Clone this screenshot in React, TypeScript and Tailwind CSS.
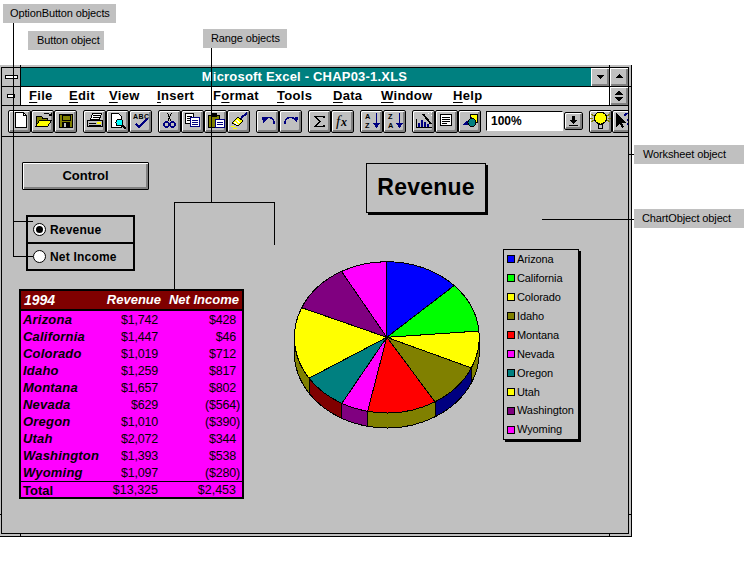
import React from "react";

const NAVY = "#000080";
const OLIVE = "#808000";

const Ico = ({ children }: { children: React.ReactNode }) => (
  <svg width="21" height="21" viewBox="0 0 21 21" shapeRendering="crispEdges" className="block">
    {children}
  </svg>
);

const icons: Record<string, React.ReactNode> = {
  newDoc: <Ico><path d="M6.5 1.5H14.5L17.5 4.5V16.5H6.5Z" fill="#fff" stroke="#000" /><path d="M14.5 1.5V4.5H17.5" fill="none" stroke="#000" /></Ico>,
  open: (
    <Ico>
      <path d="M4.5 15.5V5.5H9.5L11 7.5H15.5V9.5" fill="#808000" stroke="#000" />
      <path d="M3.5 15.5L7.5 9.5H19.5L15.5 15.5Z" fill="#ffff00" stroke="#000" />
      <path d="M11.5 3.5C13 1.5 16 1.5 18 4" fill="none" stroke="#000" />
      <path d="M16 5H20V2Z" fill="#000" />
    </Ico>
  ),
  save: (
    <Ico>
      <rect x="4.5" y="3.5" width="13" height="13" fill={OLIVE} stroke="#000" />
      <rect x="7" y="4" width="8" height="5" fill="#808000" stroke="#000" strokeWidth="1" />
      <rect x="7" y="11" width="8" height="6" fill="#000" />
      <rect x="9" y="12" width="2" height="4" fill="#c0c0c0" />
    </Ico>
  ),
  print: (
    <Ico>
      <path d="M6.5 8.5L8.5 2.5H17.5L15.5 8.5Z" fill="#fff" stroke="#000" />
      <path d="M9 4.5H16M8.5 6.5H15.5" stroke="#000" />
      <path d="M3.5 9.5H18.5V15.5H3.5Z" fill="#c0c0c0" stroke="#000" />
      <path d="M5 12.5H12M5 14.5H17" stroke="#000" />
      <rect x="13" y="11" width="4" height="2" fill="#ffff00" />
    </Ico>
  ),
  preview: (
    <Ico>
      <path d="M4.5 2.5H11.5L14.5 5.5V16.5H4.5Z" fill="#fff" stroke="#000" />
      <circle cx="12.5" cy="11.5" r="3.5" fill="#00ffff" stroke="#000" />
      <path d="M15 14L19 18" stroke="#000" strokeWidth="2" />
    </Ico>
  ),
  spell: (
    <Ico>
      <text x="3" y="7.5" fontSize="7" fontWeight="700" fontFamily="Liberation Sans" fill="#000" letterSpacing="0.4">ABC</text>
      <path d="M6 13L9 16L17 8" fill="none" stroke={NAVY} strokeWidth="2" />
    </Ico>
  ),
  cut: (
    <Ico>
      <path d="M8.5 11L12.5 2M12.5 11L8.5 2" stroke="#000" />
      <circle cx="7.5" cy="13.5" r="2.5" fill="none" stroke={NAVY} strokeWidth="1.4" />
      <circle cx="13.5" cy="13.5" r="2.5" fill="none" stroke={NAVY} strokeWidth="1.4" />
    </Ico>
  ),
  copy: (
    <Ico>
      <path d="M3.5 2.5H11.5V12.5H3.5Z" fill="#fff" stroke="#000" />
      <path d="M5 5.5H10M5 7.5H10M5 9.5H8" stroke="#000" />
      <path d="M8.5 6.5H17.5V15.5H8.5Z" fill="#fff" stroke={NAVY} />
      <path d="M10 9.5H16M10 11.5H16M10 13.5H16" stroke={NAVY} />
    </Ico>
  ),
  paste: (
    <Ico>
      <path d="M3.5 4.5H14.5V16.5H3.5Z" fill={OLIVE} stroke="#000" />
      <rect x="6" y="2" width="6" height="4" fill="#000" />
      <path d="M10.5 8.5H19.5V16.5H10.5Z" fill="#fff" stroke={NAVY} />
      <path d="M12 11.5H18M12 13.5H18" stroke={NAVY} />
    </Ico>
  ),
  brush: (
    <Ico>
      <path d="M19 2L13 7" stroke={NAVY} strokeWidth="2" />
      <path d="M10 6L15 10L10 15L4 12Z" fill="#ffff00" stroke="#000" />
      <path d="M8 9L12 12M6 11L10 14" stroke="#fff" />
      <path d="M3 15H7M5 17H9" stroke="#ffff00" />
    </Ico>
  ),
  undo: (
    <Ico>
      <path d="M8 7.5C12 5.5 17 6.5 17 12.5" fill="none" stroke={NAVY} strokeWidth="1.6" />
      <path d="M5 6L11 7L6 12Z" fill={NAVY} />
    </Ico>
  ),
  redo: (
    <Ico>
      <path d="M14 7.5C10 5.5 5 6.5 5 12.5" fill="none" stroke={NAVY} strokeWidth="1.6" />
      <path d="M18 6L12 7L17 12Z" fill={NAVY} />
    </Ico>
  ),
  sum: <Ico><path d="M15 7V5.5H6.5L11 10.5L6.5 15.5H15V14" fill="none" stroke="#000" strokeWidth="1.6" /></Ico>,
  fx: (
    <Ico>
      <text x="4" y="15" fontSize="15" fontStyle="italic" fontFamily="Liberation Serif" fill="#000">f</text>
      <text x="9" y="15" fontSize="12" fontStyle="italic" fontWeight="700" fontFamily="Liberation Serif" fill="#000">x</text>
    </Ico>
  ),
  az: (
    <Ico>
      <text x="4" y="8" fontSize="7.4" fontWeight="700" fontFamily="Liberation Sans" fill="#000">A</text>
      <text x="4" y="16.5" fontSize="7.4" fontWeight="700" fontFamily="Liberation Sans" fill="#000">Z</text>
      <path d="M15.5 2V15" stroke={NAVY} strokeWidth="1.5" />
      <path d="M12 12H19L15.5 17Z" fill={NAVY} />
    </Ico>
  ),
  za: (
    <Ico>
      <text x="4" y="8" fontSize="7.4" fontWeight="700" fontFamily="Liberation Sans" fill="#000">Z</text>
      <text x="4" y="16.5" fontSize="7.4" fontWeight="700" fontFamily="Liberation Sans" fill="#000">A</text>
      <path d="M15.5 2V15" stroke={NAVY} strokeWidth="1.5" />
      <path d="M12 12H19L15.5 17Z" fill={NAVY} />
    </Ico>
  ),
  chart: (
    <Ico>
      <path d="M3.5 8V16.5H19" fill="none" stroke="#000" />
      <rect x="5" y="12" width="2" height="4" fill={NAVY} />
      <rect x="8" y="9" width="2" height="7" fill={NAVY} />
      <rect x="11" y="11" width="2" height="5" fill={NAVY} />
      <rect x="14" y="13" width="2" height="3" fill={NAVY} />
      <path d="M10 3L18 13" stroke="#000" strokeWidth="2" />
      <path d="M15 2H16M18 4H19M18 1H19" stroke="#fff" />
    </Ico>
  ),
  textBox: (
    <Ico>
      <rect x="4.5" y="3.5" width="11" height="11" fill="#fff" stroke="#000" />
      <path d="M6 6.5H14M6 8.5H14M6 10.5H14M6 12.5H11" stroke="#000" />
    </Ico>
  ),
  draw: (
    <Ico>
      <rect x="11.5" y="3.5" width="7" height="8" fill="#ffff00" stroke="#000" />
      <path d="M3 14L13 6V14Z" fill={NAVY} />
      <circle cx="13" cy="11.5" r="4" fill="#008080" stroke="#000" />
    </Ico>
  ),
  bulb: (
    <Ico>
      <path d="M1 3L4 5M20 3L17 5M1 11L4 9M20 11L17 9M0 7H3M18 7H21" stroke="#808000" />
      <circle cx="10.5" cy="7" r="6" fill="#ffff00" stroke="#000" />
      <path d="M8.5 13.5H12.5V17.5H8.5Z" fill="#c0c0c0" stroke="#000" />
    </Ico>
  ),
  help: (
    <Ico>
      <path d="M3 2V16L6.5 12.5L9 17L11 16L9 12H13Z" fill="#000" />
      <path d="M12 5C12 1.5 17.5 1.5 17.5 5C17.5 7 14.5 7 14.5 10M14.5 11.5V13.5" fill="none" stroke={NAVY} strokeWidth="1.6" />
    </Ico>
  ),
};

const raised =
  "bg-[#c0c0c0] border border-black rounded-[2px] shadow-[inset_1px_1px_0_#ffffff,inset_-2px_-2px_0_#808080]";

const Tool = ({ name }: { name: string }) => (
  <div className={`w-[23px] h-[23px] shrink-0 ${raised}`}>{icons[name]}</div>
);

const ToolGroup = ({ names }: { names: string[] }) => (
  <div className="flex shrink-0">
    {names.map((n) => (
      <Tool key={n} name={n} />
    ))}
  </div>
);

const WinButton = ({ d }: { d: string }) => (
  <div className="w-[18px] h-full bg-[#c0c0c0] shadow-[inset_1px_1px_0_#ffffff,inset_-2px_-2px_0_#808080]">
    <svg width="18" height="18" viewBox="0 0 18 18" shapeRendering="crispEdges" className="block">
      <path d={d} fill="#000" />
    </svg>
  </div>
);

const Callout = ({ text, cls }: { text: string; cls: string }) => (
  <div className={`absolute h-[19px] bg-[#c0c0c0] text-[11px] leading-[18px] tracking-[-0.12px] text-black whitespace-nowrap ${cls}`}>{text}</div>
);

const Line = ({ cls }: { cls: string }) => <div className={`absolute bg-black ${cls}`} />;

const CX = 386.8;
const CY = 337.3;
const RX = 92.5;
const RY = 75.6;
const DEPTH = 15;

const onEllipse = ([x, y]: number[]): number[] => {
  const a = Math.atan2((y - CY) / RY, (x - CX) / RX);
  return [CX + RX * Math.cos(a), CY + RY * Math.sin(a)];
};

const edge = [
  [386.8, 261.7],
  [454, 285.7],
  [479.3, 331],
  [470.7, 367.7],
  [435, 401.7],
  [367.7, 411],
  [342.3, 402.7],
  [310, 377.7],
  [301.7, 307.7],
  [341.7, 271.7],
].map(onEllipse);

const topColors = ["#0000ff", "#00ff00", "#ffff00", "#808000", "#ff0000", "#ff00ff", "#008080", "#ffff00", "#800080", "#ff00ff"];

const side = (a: number[], b: number[]) =>
  `M${a[0]} ${a[1]}A${RX} ${RY} 0 0 1 ${b[0]} ${b[1]}L${b[0]} ${b[1] + DEPTH}A${RX} ${RY} 0 0 0 ${a[0]} ${a[1] + DEPTH}Z`;

const PieChart = () => {
  const rightMost = [CX + RX, CY];
  const leftMost = [CX - RX, CY];
  const sides: [number[], number[], string][] = [
    [rightMost, edge[3], OLIVE],
    [edge[3], edge[4], NAVY],
    [edge[4], edge[5], OLIVE],
    [edge[5], edge[6], "#800080"],
    [edge[6], edge[7], "#800000"],
    [edge[7], leftMost, OLIVE],
  ];
  return (
    <svg width="195" height="175" viewBox="290 258 195 175" shapeRendering="crispEdges" className="block">
      {sides.map(([a, b, c], i) => (
        <path key={i} d={side(a, b)} fill={c} stroke="#000" />
      ))}
      {edge.map((p, i) => {
        const q = edge[(i + 1) % edge.length];
        return (
          <path
            key={i}
            d={`M${CX} ${CY}L${p[0]} ${p[1]}A${RX} ${RY} 0 0 1 ${q[0]} ${q[1]}Z`}
            fill={topColors[i]}
            stroke="#000"
          />
        );
      })}
    </svg>
  );
};

const rows: [string, string, string][] = [
  ["Arizona", "$1,742", "$428"],
  ["California", "$1,447", "$46"],
  ["Colorado", "$1,019", "$712"],
  ["Idaho", "$1,259", "$817"],
  ["Montana", "$1,657", "$802"],
  ["Nevada", "$629", "($564)"],
  ["Oregon", "$1,010", "($390)"],
  ["Utah", "$2,072", "$344"],
  ["Washington", "$1,393", "$538"],
  ["Wyoming", "$1,097", "($280)"],
];

const legend: [string, string][] = [
  ["Arizona", "bg-[#0000ff]"],
  ["California", "bg-[#00ff00]"],
  ["Colorado", "bg-[#ffff00]"],
  ["Idaho", "bg-[#808000]"],
  ["Montana", "bg-[#ff0000]"],
  ["Nevada", "bg-[#ff00ff]"],
  ["Oregon", "bg-[#008080]"],
  ["Utah", "bg-[#ffff00]"],
  ["Washington", "bg-[#800080]"],
  ["Wyoming", "bg-[#ff00ff]"],
];

const menu: [string, string, string, string][] = [
  ["", "F", "ile", "w-[40px]"],
  ["", "E", "dit", "w-[40px]"],
  ["", "V", "iew", "w-[48px]"],
  ["", "I", "nsert", "w-[56px]"],
  ["F", "o", "rmat", "w-[64px]"],
  ["", "T", "ools", "w-[56px]"],
  ["", "D", "ata", "w-[48px]"],
  ["", "W", "indow", "w-[72px]"],
  ["", "H", "elp", "w-[40px]"],
];

const Radio = ({ checked, label }: { checked?: boolean; label: string }) => (
  <div className="flex items-center h-[25px] pl-[5px] gap-[4px]">
    <div className="w-[13px] h-[13px] rounded-full border border-black bg-white flex items-center justify-center">
      {checked && <div className="w-[7px] h-[7px] rounded-full bg-black" />}
    </div>
    <span className="text-[12px] font-bold tracking-[0.2px] text-black leading-none">{label}</span>
  </div>
);

export default function App() {
  return (
    <div className="relative w-[744px] h-[576px] bg-white overflow-hidden font-['Liberation_Sans',Arial,sans-serif]">
      <div className="absolute left-0 top-[65px] w-[632px] h-[472px] bg-[#c0c0c0] border-r border-b border-black pt-[2px] pl-[1px] pr-[2px] pb-[2px]">
        <div className="w-[628px] h-[467px] border border-black flex flex-col overflow-hidden">
          <div className="flex h-[19px] border-b border-black shrink-0">
            <div className="w-[19px] border-r border-black flex items-center justify-center">
              <div className="w-[13px] h-[4px] bg-white border border-black" />
            </div>
            <div className="flex-1 bg-[#008080] text-white text-[13px] font-bold leading-[18px] text-center pr-[3px] tracking-[0.2px]">
              Microsoft Excel - CHAP03-1.XLS
            </div>
            <WinButton d="M5 7H13L9 11Z" />
            <div className="w-px bg-black" />
            <WinButton d="M9 6L13 10H5Z" />
          </div>
          <div className="flex h-[19px] border-b border-black shrink-0">
            <div className="w-[19px] border-r border-black flex items-center justify-center">
              <div className="w-[8px] h-[4px] bg-white border border-black" />
            </div>
            <div className="flex-1 bg-white flex items-center pl-[8px] text-[13px] font-bold text-black tracking-[0.3px] border-r border-black">
              {menu.map(([pre, key, rest, width]) => (
                <span key={key + rest} className={`whitespace-nowrap shrink-0 ${width}`}>
                  {pre}
                  <span className="underline underline-offset-2">{key}</span>
                  {rest}
                </span>
              ))}
            </div>
            <WinButton d="M9 3L13 7.5H5ZM5 10H13L9 14.5Z" />
          </div>
          <div className="flex items-start h-[31px] border-b border-black shrink-0 pt-[4px] pl-[6px] gap-[6px] overflow-hidden">
            <ToolGroup names={["newDoc", "open", "save"]} />
            <ToolGroup names={["print", "preview", "spell"]} />
            <ToolGroup names={["cut", "copy", "paste", "brush"]} />
            <ToolGroup names={["undo", "redo"]} />
            <ToolGroup names={["sum", "fx"]} />
            <ToolGroup names={["az", "za"]} />
            <ToolGroup names={["chart", "textBox", "draw"]} />
            <div className="flex shrink-0 gap-px -ml-px">
              <div className="w-[77px] h-[20px] mt-px bg-white border border-black border-r-white border-b-white shadow-[1px_1px_0_#c0c0c0] pl-[4px] text-[12px] font-bold leading-[18px] text-black">
                100%
              </div>
              <div className={`w-[19px] h-[18px] mt-[2px] ${raised}`}>
                <svg width="17" height="16" viewBox="0 0 17 16" shapeRendering="crispEdges" className="block">
                  <path d="M7 3H10V7H12L8.5 11L5 7H7ZM4 12H13V13H4Z" fill="#000" />
                </svg>
              </div>
            </div>
            <ToolGroup names={["bulb", "help"]} />
          </div>

          <div className="relative flex-1 bg-[#c0c0c0]">
            <div className="absolute left-[20px] top-[25px] w-[127px] h-[28px] bg-[#c0c0c0] border border-black rounded-[1px] shadow-[inset_1px_1px_0_#ffffff,inset_-2px_-2px_0_#808080] flex items-center justify-center text-[13px] font-bold text-black">
              Control
            </div>

            <div className="absolute left-[24px] top-[78px] w-[109px] h-[56px] border-2 border-black flex flex-col">
              <Radio checked label="Revenue" />
              <div className="h-[2px] bg-black shrink-0" />
              <Radio label="Net Income" />
            </div>

            <div className="absolute left-[17px] top-[152px] w-[225px] h-[210px] border-2 border-black bg-[#ff00ff] text-black">
              <div className="grid grid-cols-[60px_80px_78px] items-center h-[18px] leading-[18px] bg-[#800000] text-white text-[13px] font-bold italic whitespace-nowrap">
                <span className="pl-[3px] text-[14px] leading-none">1994</span>
                <span className="text-right">Revenue</span>
                <span className="text-right">Net Income</span>
              </div>
              <div className="h-[2px] bg-black" />
              {rows.map(([name, rev, net]) => (
                <div key={name} className="grid grid-cols-[90px_47px_78px] items-center h-[17px] leading-[16px] text-[12.5px] tracking-[-0.2px]">
                  <span className="pl-[2px] text-[13px] font-bold italic whitespace-nowrap tracking-[0.2px]">{name}</span>
                  <span className="text-right">{rev}</span>
                  <span className={`text-right whitespace-nowrap ${net.startsWith("(") ? "-mr-[4px]" : ""}`}>{net}</span>
                </div>
              ))}
              <div className="grid grid-cols-[90px_47px_78px] items-center h-[17px] leading-[15px] border-t border-black text-[12.5px]">
                <span className="pl-[2px] text-[13px] font-bold">Total</span>
                <span className="text-right">$13,325</span>
                <span className="text-right">$2,453</span>
              </div>
            </div>

            <div className="absolute left-[364px] top-[26px] w-[120px] h-[50px] pb-[2px] border border-black shadow-[2px_2px_0_#000] flex items-center justify-center text-[23px] font-bold tracking-[0.2px] text-black">
              Revenue
            </div>

            <div className="absolute left-[288px] top-[121px]">
              <PieChart />
            </div>

            <div className="absolute left-[501px] top-[112px] w-[76px] h-[191px] border border-black shadow-[2px_2px_0_#000] flex flex-col">
              {legend.map(([label, color]) => (
                <div key={label} className="flex items-center h-[19px] pl-[3px] gap-[2px] text-[11px] tracking-[-0.1px] text-black">
                  <div className={`w-[8px] h-[8px] border border-black ${color}`} />
                  <span className="whitespace-nowrap">{label}</span>
                </div>
              ))}
            </div>
          </div>
        </div>
      </div>

      {/* window frame notches */}
      <Line cls="left-[20px] top-[65px] w-px h-[2px]" />
      <Line cls="left-[609px] top-[65px] w-px h-[2px]" />
      <Line cls="left-[20px] top-[534px] w-px h-[3px]" />
      <Line cls="left-[609px] top-[534px] w-px h-[3px]" />
      <Line cls="left-[629px] top-[86px] w-[2px] h-px" />
      <Line cls="left-[629px] top-[514px] w-[2px] h-px" />
      <Line cls="left-0 top-[514px] w-px h-px" />

      {/* callouts and leader lines */}
      <Callout text="OptionButton objects" cls="left-[3px] top-[4px] w-[113px] pl-[7px]" />
      <Callout text="Button object" cls="left-[28px] top-[31px] w-[76px] pl-[9px]" />
      <Callout text="Range objects" cls="left-[203px] top-[29px] w-[84px] pl-[8px]" />
      <Callout text="Worksheet object" cls="left-[634px] top-[145px] w-[110px] pl-[9px]" />
      <Callout text="ChartObject object" cls="left-[634px] top-[209px] w-[110px] pl-[8px]" />

      <Line cls="left-[13px] top-[23px] w-px h-[234px]" />
      <Line cls="left-[13px] top-[221px] w-[20px] h-px" />
      <Line cls="left-[13px] top-[256px] w-[20px] h-px" />
      <Line cls="left-[211px] top-[48px] w-px h-[154px]" />
      <Line cls="left-[174px] top-[202px] w-[100px] h-px" />
      <Line cls="left-[274px] top-[202px] w-px h-[43px]" />
      <Line cls="left-[174px] top-[202px] w-px h-[89px]" />
      <Line cls="left-[629px] top-[154px] w-[5px] h-px" />
      <Line cls="left-[542px] top-[219px] w-[92px] h-px" />
    </div>
  );
}
